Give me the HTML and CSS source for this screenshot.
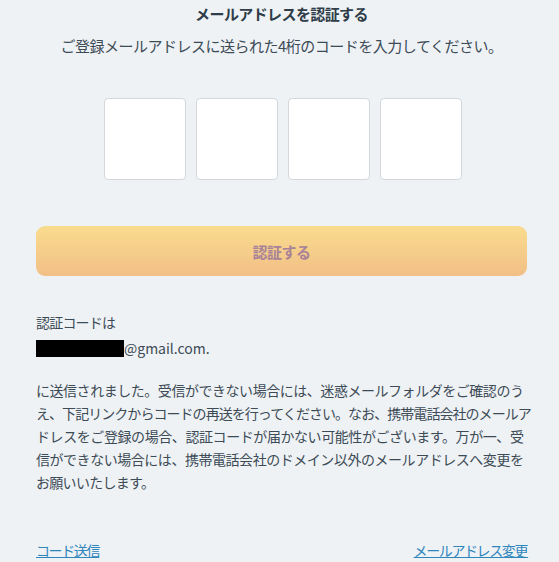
FILE: index.html
```html
<!DOCTYPE html>
<html lang="ja">
<head>
<meta charset="utf-8">
<title>メールアドレスを認証する</title>
<link rel="stylesheet" href="styles.css">
</head>
<body>
<main class="page">
  <h1 class="title">メールアドレスを認証する</h1>
  <p class="lead">ご登録メールアドレスに送られた4桁のコードを入力してください。</p>
  <div class="codes">
    <input class="code" type="text" maxlength="1" aria-label="1桁目">
    <input class="code" type="text" maxlength="1" aria-label="2桁目">
    <input class="code" type="text" maxlength="1" aria-label="3桁目">
    <input class="code" type="text" maxlength="1" aria-label="4桁目">
  </div>
  <button class="submit" type="button">認証する</button>
  <p class="label">認証コードは</p>
  <p class="email"><span class="redact"></span>@gmail.com.</p>
  <p class="notice"><span class="line">に送信されました。受信ができない場合には、迷惑メールフォルダをご確認のう</span><span class="line">え、下記リンクからコードの再送を行ってください。なお、携帯電話会社のメールア</span><span class="line">ドレスをご登録の場合、認証コードが届かない可能性がございます。万が一、受</span><span class="line">信ができない場合には、携帯電話会社のドメイン以外のメールアドレスへ変更を</span><span class="line last">お願いいたします。</span></p>
  <div class="links">
    <a class="link" href="#">コード送信</a>
    <a class="link" href="#">メールアドレス変更</a>
  </div>
</main>
</body>
</html>
```
FILE: styles.css
```css
html, body {
  margin: 0;
  padding: 0;
  background: #eef2f5;
}
body {
  font-family: "Noto Sans CJK JP", "Noto Sans", sans-serif;
  color: #3d4b56;
}
.page {
  width: 491px;
  margin-left: 36px;
  padding-top: 4px;
  display: flex;
  flex-direction: column;
}
.title {
  margin: 0;
  font-size: 15px;
  line-height: 20px;
  font-weight: 700;
  letter-spacing: -0.6px;
  text-align: center;
  color: #2f3d48;
}
.lead {
  margin: 11px 0 0;
  font-size: 15px;
  line-height: 22px;
  letter-spacing: -0.5px;
  text-align: center;
}
.codes {
  margin-top: 41px;
  display: flex;
  justify-content: center;
  gap: 10px;
  padding-left: 2px;
}
.code {
  box-sizing: border-box;
  width: 82px;
  height: 82px;
  margin: 0;
  padding: 0;
  background: #fff;
  border: 1px solid #d3d7db;
  border-radius: 4px;
}
.submit {
  margin-top: 46px;
  height: 50px;
  border: none;
  border-radius: 9px;
  background: linear-gradient(#f9dc8e, #f2bf86);
  color: #a88397;
  font-family: inherit;
  font-size: 15px;
  font-weight: 700;
  letter-spacing: -0.5px;
}
.label {
  margin: 34px 0 0;
  font-size: 14px;
  line-height: 24px;
  letter-spacing: -0.8px;
}
.email {
  margin: 2px 0 0;
  font-size: 14px;
  line-height: 24px;
  display: flex;
  align-items: center;
}
.redact {
  display: inline-block;
  width: 88px;
  height: 17px;
  background: #000;
}
.notice {
  margin: 19px 0 0;
  width: 487px;
  font-size: 14px;
  line-height: 23px;
  letter-spacing: -0.95px;
}
.line {
  display: block;
  white-space: nowrap;
  text-align: justify;
  text-align-last: justify;
}
.line.last {
  text-align-last: left;
  letter-spacing: -0.7px;
}
.links {
  margin-top: 46px;
  display: flex;
  justify-content: space-between;
}
.link {
  font-size: 14px;
  line-height: 20px;
  letter-spacing: -1.4px;
  color: #2f86bd;
  text-decoration: underline;
}
```
